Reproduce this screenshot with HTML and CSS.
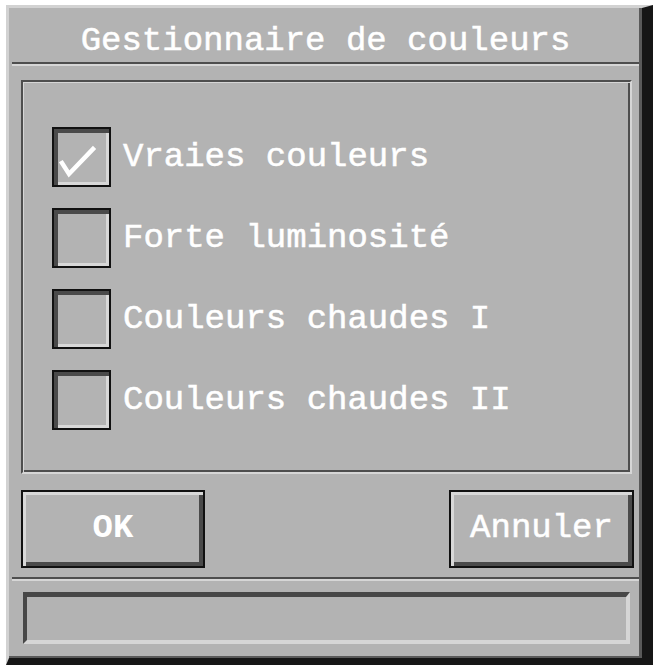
FILE: index.html
```html
<!DOCTYPE html>
<html lang="fr">
<head>
<meta charset="utf-8">
<title>Gestionnaire de couleurs</title>
<link rel="stylesheet" href="styles.css">
</head>
<body>
<div class="window">
  <div class="title">Gestionnaire de couleurs</div>
  <div class="sep"></div>
  <div class="panel">
    <div class="row">
      <span class="box"><svg width="55" height="56" viewBox="0 0 55 56"><polyline points="8,34 15,45 39,20" fill="none" stroke="#fff" stroke-width="4.5" stroke-linejoin="miter" stroke-linecap="square"/></svg></span>
      <span class="label">Vraies couleurs</span>
    </div>
    <div class="row">
      <span class="box"></span>
      <span class="label">Forte luminosité</span>
    </div>
    <div class="row">
      <span class="box"></span>
      <span class="label">Couleurs chaudes I</span>
    </div>
    <div class="row">
      <span class="box"></span>
      <span class="label">Couleurs chaudes II</span>
    </div>
  </div>
  <div class="buttons">
    <div class="btn btn-ok">OK</div>
    <div class="btn btn-cancel">Annuler</div>
  </div>
  <div class="sep"></div>
  <div class="status"></div>
</div>
</body>
</html>
```
FILE: styles.css
```css
html, body {
  margin: 0;
  padding: 0;
  background: #ffffff;
}
body {
  width: 653px;
  height: 665px;
  overflow: hidden;
}
.window {
  box-sizing: border-box;
  margin: 5px 0 0 6px;
  width: 647px;
  height: 660px;
  background: #b3b3b3;
  border-style: solid;
  border-width: 3px 11px 7px 3px;
  border-color: #d2d2d2 #161616 #161616 #d2d2d2;
  box-shadow: inset -3px -2px 0 #5a5a5a;
  display: flex;
  flex-direction: column;
  font-family: "Liberation Mono", "DejaVu Sans Mono", monospace;
  font-size: 34px;
  color: #ffffff;
  -webkit-text-stroke: 0.5px #ffffff;
}
.title {
  height: 54px;
  box-sizing: border-box;
  padding-top: 12px;
  line-height: 42px;
  text-align: center;
  white-space: nowrap;
}
.sep {
  margin: 0 3px;
  height: 0;
  border-top: 2px solid #4e4e4e;
  border-bottom: 2px solid #d6d6d6;
}
.panel {
  box-sizing: border-box;
  margin: 14px 10px 0 12px;
  height: 394px;
  border: 2px solid;
  border-color: #4e4e4e #d6d6d6 #d6d6d6 #4e4e4e;
  box-shadow: inset 1px 1px 0 #d6d6d6, inset -2px -2px 0 #4e4e4e;
  padding: 45px 0 0 29px;
  display: flex;
  flex-direction: column;
  gap: 21px;
}
.row {
  display: flex;
  align-items: center;
  height: 60px;
  gap: 12px;
}
.box {
  box-sizing: border-box;
  flex: none;
  width: 59px;
  height: 60px;
  border: 2px solid #111111;
  box-shadow: inset 4px 4px 0 #4a4a4a, inset -3px -3px 0 #d8d8d8;
  display: block;
}
.box svg {
  display: block;
}
.label {
  line-height: 60px;
  white-space: nowrap;
}
.buttons {
  margin-top: 16px;
  margin-bottom: 9px;
  height: 78px;
  padding: 0 8px 0 12px;
  display: flex;
  justify-content: space-between;
}
.btn {
  box-sizing: border-box;
  height: 78px;
  border: 2px solid #111111;
  box-shadow: inset 3px 3px 0 #d8d8d8, inset -4px -4px 0 #4a4a4a;
  display: flex;
  align-items: center;
  justify-content: center;
  padding-bottom: 2px;
}
.btn-ok {
  width: 184px;
  font-weight: bold;
  -webkit-text-stroke: 0;
}
.btn-cancel {
  width: 185px;
}
.status {
  box-sizing: border-box;
  margin: 11px 12px 0 14px;
  height: 52px;
  border-style: solid;
  border-width: 5px 4px 4px 4px;
  border-color: #474747 #d6d6d6 #d6d6d6 #474747;
}
```
